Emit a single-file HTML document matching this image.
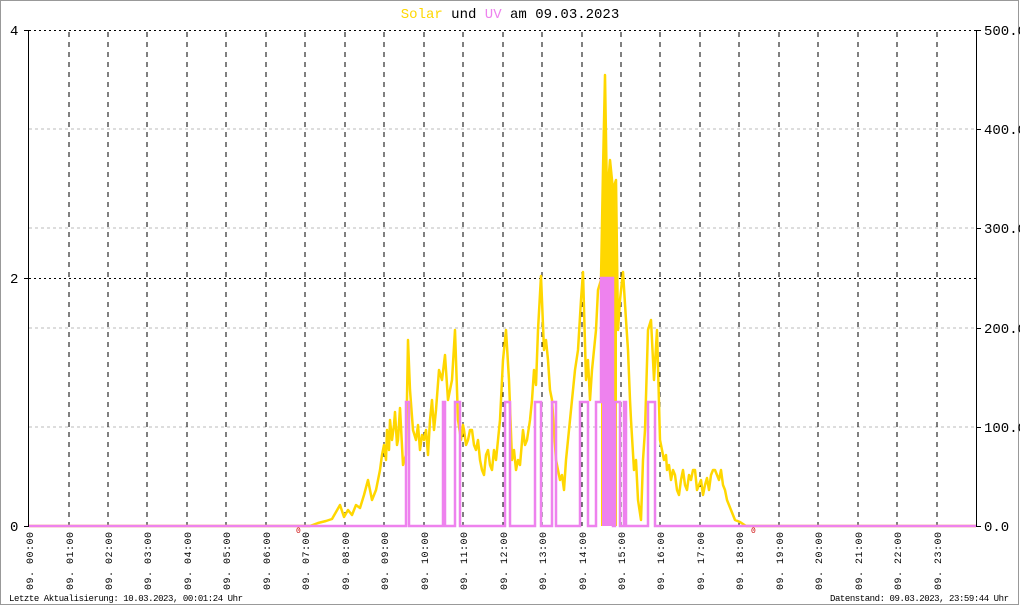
<!DOCTYPE html>
<html><head><meta charset="utf-8"><style>
html,body{margin:0;padding:0;background:#fff}
svg{display:block}
text{font-family:"Liberation Mono",monospace}
</style></head><body>
<svg width="1020" height="606" viewBox="0 0 1020 606" xmlns="http://www.w3.org/2000/svg">
<rect x="0.5" y="0.5" width="1018" height="604" fill="#fff" stroke="#999"/>
<text x="510" y="18" font-size="14" text-anchor="middle"><tspan fill="#FFD700">Solar</tspan> und <tspan fill="#EE82EE">UV</tspan> am 09.03.2023</text>
<g stroke="#bbb" stroke-dasharray="3,3">
<line x1="29" y1="129" x2="976" y2="129"/><line x1="29" y1="228" x2="976" y2="228"/>
<line x1="29" y1="328" x2="976" y2="328"/><line x1="29" y1="427" x2="976" y2="427"/>
</g>
<g stroke="#000" stroke-dasharray="2,3">
<line x1="29" y1="30.5" x2="976" y2="30.5"/><line x1="29" y1="278.5" x2="976" y2="278.5"/>
</g>
<g stroke="#000" stroke-dasharray="5,5">
<line x1="69" y1="32" x2="69" y2="526"/><line x1="108" y1="32" x2="108" y2="526"/><line x1="147" y1="32" x2="147" y2="526"/><line x1="187" y1="32" x2="187" y2="526"/><line x1="226" y1="32" x2="226" y2="526"/><line x1="266" y1="32" x2="266" y2="526"/><line x1="305" y1="32" x2="305" y2="526"/><line x1="345" y1="32" x2="345" y2="526"/><line x1="384" y1="32" x2="384" y2="526"/><line x1="424" y1="32" x2="424" y2="526"/><line x1="463" y1="32" x2="463" y2="526"/><line x1="503" y1="32" x2="503" y2="526"/><line x1="542" y1="32" x2="542" y2="526"/><line x1="582" y1="32" x2="582" y2="526"/><line x1="621" y1="32" x2="621" y2="526"/><line x1="660" y1="32" x2="660" y2="526"/><line x1="700" y1="32" x2="700" y2="526"/><line x1="739" y1="32" x2="739" y2="526"/><line x1="779" y1="32" x2="779" y2="526"/><line x1="818" y1="32" x2="818" y2="526"/><line x1="858" y1="32" x2="858" y2="526"/><line x1="897" y1="32" x2="897" y2="526"/><line x1="937" y1="32" x2="937" y2="526"/>
</g>
<g stroke="#000">
<line x1="28.5" y1="30" x2="28.5" y2="527"/><line x1="976.5" y1="30" x2="976.5" y2="527"/>
<line x1="24" y1="30.5" x2="29" y2="30.5"/><line x1="24" y1="278.5" x2="29" y2="278.5"/><line x1="24" y1="526.5" x2="29" y2="526.5"/>
<line x1="976" y1="30.5" x2="981" y2="30.5"/><line x1="976" y1="129.5" x2="981" y2="129.5"/><line x1="976" y1="228.5" x2="981" y2="228.5"/><line x1="976" y1="328.5" x2="981" y2="328.5"/><line x1="976" y1="427.5" x2="981" y2="427.5"/><line x1="976" y1="526.5" x2="981" y2="526.5"/>
</g>
<g font-size="14" fill="#000">
<text x="10" y="35">4</text><text x="10" y="283">2</text><text x="10" y="531">0</text>
<text x="984" y="35">500.0</text><text x="984" y="134">400.0</text><text x="984" y="233">300.0</text><text x="984" y="333">200.0</text><text x="984" y="432">100.0</text><text x="984" y="531">0.0</text>
</g>
<polygon fill="#FFD700" points="601,526 601,290 603,170 605,74 607,200 609,160 612,190 615,180 617,320 617,526"/>
<polyline fill="none" stroke="#FFD700" stroke-width="2.5" stroke-linejoin="round" points="29,526 310,526 318,523 326,521 332,519 336,512 340,505 344,517 348,510 352,515 356,505 360,508 364,495 368,480 372,500 376,490 380,470 382,455 384,445 386,460 387,430 389,450 390,420 392,440 394,425 395,412 397,445 398,440 400,408 403,465 406,455 408,340 410,390 413,430 416,440 418,425 420,450 422,435 424,440 426,430 428,455 430,420 432,400 434,430 436,410 439,370 442,380 445,355 448,400 450,390 452,380 455,330 458,420 461,440 463,425 464,430 466,445 468,440 470,430 472,430 474,445 476,450 478,440 480,460 482,470 484,475 486,455 488,450 490,465 492,470 494,450 496,460 498,440 500,420 503,360 506,330 509,380 512,460 514,450 516,470 518,460 520,465 523,430 525,445 527,440 530,420 532,400 534,370 536,385 538,330 541,276 544,350 546,340 548,360 550,390 552,400 554,430 556,460 558,470 560,480 562,475 564,490 566,460 568,440 570,420 572,400 575,370 578,350 581,300 583,272 586,380 588,360 590,400 592,370 594,350 596,330 598,290 601,280 603,170 605,75 607,200 610,160 613,190 616,180 618,330 620,300 623,272 626,320 628,350 630,400 631,420 634,470 636,460 638,500 641,520 643,460 645,430 648,330 651,320 654,380 657,330 660,440 662,450 664,460 666,455 667,470 669,465 671,480 673,470 675,475 677,490 679,495 681,480 683,470 685,485 687,490 689,475 691,480 693,470 695,470 697,490 699,485 701,480 703,495 705,485 707,478 709,490 711,475 713,470 715,470 717,475 719,480 721,470 723,485 725,490 727,500 729,505 731,510 733,515 735,520 740,522 746,526 976,526"/>
<polygon fill="#EE82EE" points="602,526 602,278 612,278 612,526"/>
<polyline fill="none" stroke="#EE82EE" stroke-width="2.5" points="29,526 406,526 406,402 409,402 409,526 443,526 443,402 445,402 445,526 455,526 455,402 460,402 460,526 505,526 505,402 510,402 510,526 535,526 535,402 541,402 541,526 552,526 552,402 556,402 556,526 580,526 580,402 588,402 588,526 596,526 596,402 601,402 601,278 613,278 613,526 615,526 615,402 620,402 620,526 624,526 624,402 626,402 626,526 648,526 648,402 655,402 655,526 976,526"/>
<g font-size="10" fill="#000">
<text transform="rotate(-90 33 532)" x="33" y="532" text-anchor="end" textLength="58">09. 00:00</text>
<text transform="rotate(-90 73 532)" x="73" y="532" text-anchor="end" textLength="58">09. 01:00</text>
<text transform="rotate(-90 112 532)" x="112" y="532" text-anchor="end" textLength="58">09. 02:00</text>
<text transform="rotate(-90 151 532)" x="151" y="532" text-anchor="end" textLength="58">09. 03:00</text>
<text transform="rotate(-90 191 532)" x="191" y="532" text-anchor="end" textLength="58">09. 04:00</text>
<text transform="rotate(-90 230 532)" x="230" y="532" text-anchor="end" textLength="58">09. 05:00</text>
<text transform="rotate(-90 270 532)" x="270" y="532" text-anchor="end" textLength="58">09. 06:00</text>
<text transform="rotate(-90 309 532)" x="309" y="532" text-anchor="end" textLength="58">09. 07:00</text>
<text transform="rotate(-90 349 532)" x="349" y="532" text-anchor="end" textLength="58">09. 08:00</text>
<text transform="rotate(-90 388 532)" x="388" y="532" text-anchor="end" textLength="58">09. 09:00</text>
<text transform="rotate(-90 428 532)" x="428" y="532" text-anchor="end" textLength="58">09. 10:00</text>
<text transform="rotate(-90 467 532)" x="467" y="532" text-anchor="end" textLength="58">09. 11:00</text>
<text transform="rotate(-90 507 532)" x="507" y="532" text-anchor="end" textLength="58">09. 12:00</text>
<text transform="rotate(-90 546 532)" x="546" y="532" text-anchor="end" textLength="58">09. 13:00</text>
<text transform="rotate(-90 586 532)" x="586" y="532" text-anchor="end" textLength="58">09. 14:00</text>
<text transform="rotate(-90 625 532)" x="625" y="532" text-anchor="end" textLength="58">09. 15:00</text>
<text transform="rotate(-90 664 532)" x="664" y="532" text-anchor="end" textLength="58">09. 16:00</text>
<text transform="rotate(-90 704 532)" x="704" y="532" text-anchor="end" textLength="58">09. 17:00</text>
<text transform="rotate(-90 743 532)" x="743" y="532" text-anchor="end" textLength="58">09. 18:00</text>
<text transform="rotate(-90 783 532)" x="783" y="532" text-anchor="end" textLength="58">09. 19:00</text>
<text transform="rotate(-90 822 532)" x="822" y="532" text-anchor="end" textLength="58">09. 20:00</text>
<text transform="rotate(-90 862 532)" x="862" y="532" text-anchor="end" textLength="58">09. 21:00</text>
<text transform="rotate(-90 901 532)" x="901" y="532" text-anchor="end" textLength="58">09. 22:00</text>
<text transform="rotate(-90 941 532)" x="941" y="532" text-anchor="end" textLength="58">09. 23:00</text>
</g>
<text x="296" y="533" font-size="8" fill="#c00">0</text>
<text x="751" y="533" font-size="8" fill="#c00">0</text>
<g font-size="9" fill="#000">
<text x="9" y="601" textLength="234">Letzte Aktualisierung: 10.03.2023, 00:01:24 Uhr</text>
<text x="830" y="601" textLength="179">Datenstand: 09.03.2023, 23:59:44 Uhr</text>
</g>
</svg>
</body></html>
